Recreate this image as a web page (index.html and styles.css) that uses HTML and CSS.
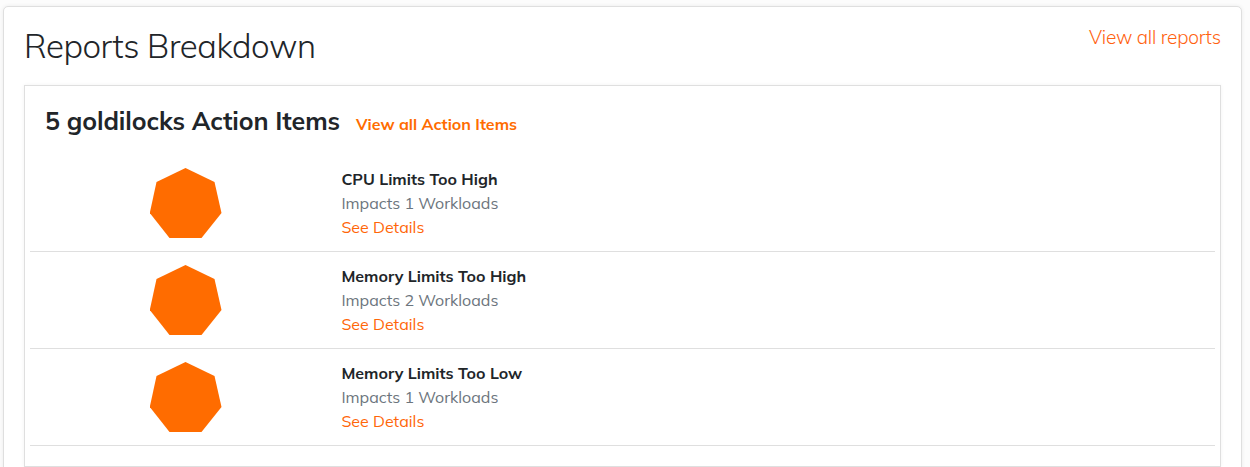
FILE: index.html
```html
<!DOCTYPE html>
<html lang="en">
<head>
<meta charset="utf-8">
<title>Reports Breakdown</title>
<link rel="stylesheet" href="styles.css">
</head>
<body>
<main class="card">
  <header class="card-header">
    <h1 class="title">Reports Breakdown</h1>
    <a class="all-reports">View all reports</a>
  </header>
  <section class="panel">
    <div class="panel-header">
      <h2 class="panel-title">5 goldilocks Action Items</h2>
      <a class="all-items">View all Action Items</a>
    </div>
    <div class="item">
      <div class="icon"><svg width="72" height="70" viewBox="0 0 72 70"><path d="M35.5 0 64.5 14 71.5 45 51.5 70H19.5L-.2 45 6.5 14Z"/></svg></div>
      <div class="info"><strong>CPU Limits Too High</strong><span class="impact">Impacts 1 Workloads</span><a class="details">See Details</a></div>
    </div>
    <div class="item">
      <div class="icon"><svg width="72" height="70" viewBox="0 0 72 70"><path d="M35.5 0 64.5 14 71.5 45 51.5 70H19.5L-.2 45 6.5 14Z"/></svg></div>
      <div class="info"><strong>Memory Limits Too High</strong><span class="impact">Impacts 2 Workloads</span><a class="details">See Details</a></div>
    </div>
    <div class="item">
      <div class="icon"><svg width="72" height="70" viewBox="0 0 72 70"><path d="M35.5 0 64.5 14 71.5 45 51.5 70H19.5L-.2 45 6.5 14Z"/></svg></div>
      <div class="info"><strong>Memory Limits Too Low</strong><span class="impact">Impacts 1 Workloads</span><a class="details">See Details</a></div>
    </div>
  </section>
</main>
</body>
</html>
```
FILE: styles.css
```css
* { box-sizing: border-box; }
body { margin: 0; height: 467px; overflow: hidden; background: #fcfcfc; color: #212529; font-family: Mulish, Muli, "Open Sans", sans-serif; font-size: 16px; line-height: 24px; }
.card { margin: 6px 8px 0 3px; height: 480px; padding: 20px; background: #fff; border: 1px solid #dfdfdf; border-radius: 5px; box-shadow: 0 0 4px rgba(0, 0, 0, .07); }
.card-header { display: flex; justify-content: space-between; height: 58px; }
.title { margin: 0; font-size: 33px; font-weight: 270; line-height: 37px; letter-spacing: -.43px; }
.all-reports { color: #ff6210; font-size: 19px; font-weight: 290; line-height: 20px; letter-spacing: -.2px; }
.panel { border: 1px solid #dfdfdf; height: 382px; padding: 20px 5px; box-shadow: 0 0 4px rgba(0, 0, 0, .05); }
.panel-header { display: flex; align-items: baseline; gap: 16px; height: 49px; padding-left: 15px; }
.panel-title { margin: 0; font-size: 25px; font-weight: 660; line-height: 30px; letter-spacing: -.07px; }
.all-items { color: #ff6c00; font-weight: 700; }
.item { display: flex; height: 97px; padding: 12px 0; border-bottom: 1px solid #dfdfdf; }
.icon { width: 311.4px; flex: none; display: flex; justify-content: center; padding-top: 1px; }
.icon svg { fill: #ff6c00; }
.info { display: flex; flex-direction: column; align-items: flex-start; }
.info strong { font-weight: 670; }
.impact { color: #6c757d; }
.details { color: #ff6608; }
```
